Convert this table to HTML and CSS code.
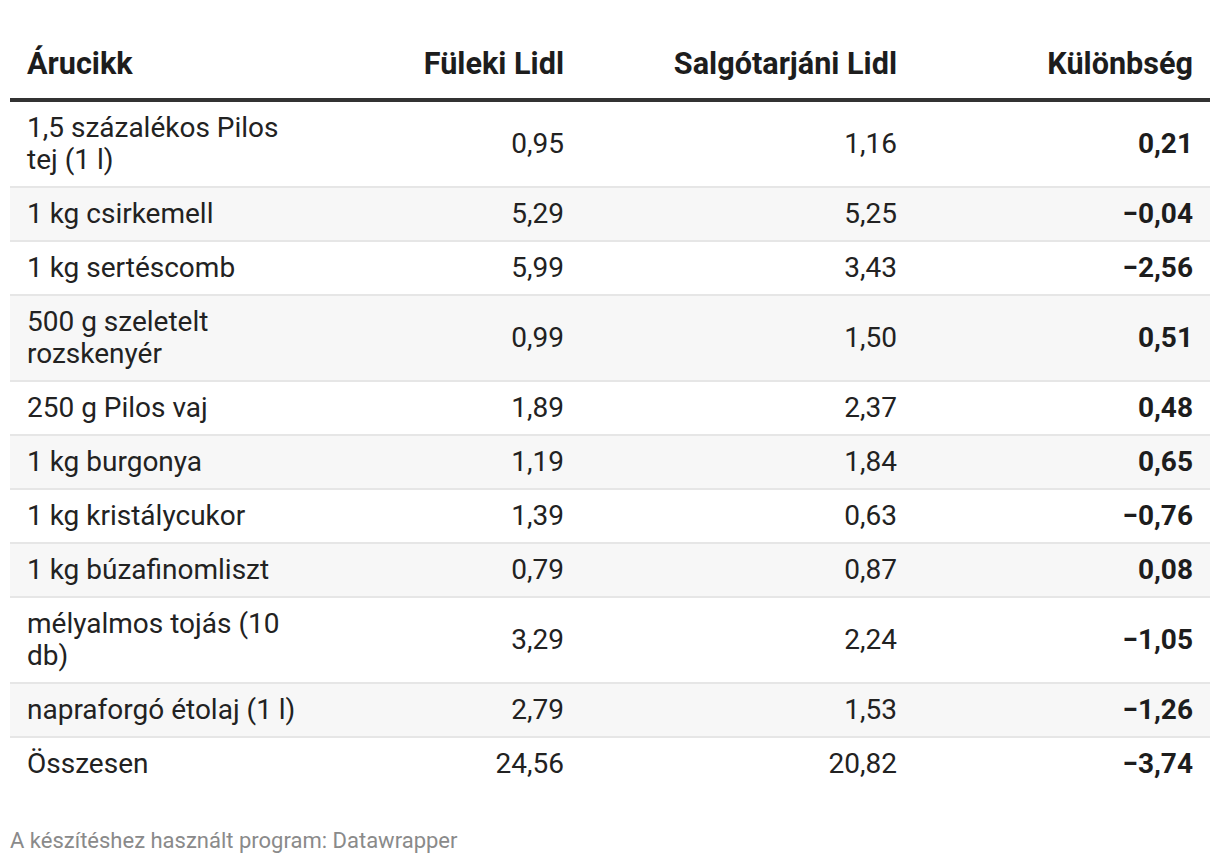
FILE: index.html
```html
<!DOCTYPE html>
<html lang="hu">
<head>
<meta charset="utf-8">
<link rel="stylesheet" href="styles.css">
</head>
<body>
<div class="page">
  <table class="dt">
    <colgroup>
      <col class="c1"><col class="c2"><col class="c3"><col class="c4">
    </colgroup>
    <thead>
      <tr>
        <th class="left">Árucikk</th>
        <th>Füleki Lidl</th>
        <th>Salgótarjáni Lidl</th>
        <th>Különbség</th>
      </tr>
    </thead>
    <tbody>
      <tr><td class="left">1,5 százalékos Pilos tej (1 l)</td><td>0,95</td><td>1,16</td><td class="b">0,21</td></tr>
      <tr><td class="left">1 kg csirkemell</td><td>5,29</td><td>5,25</td><td class="b">−0,04</td></tr>
      <tr><td class="left">1 kg sertéscomb</td><td>5,99</td><td>3,43</td><td class="b">−2,56</td></tr>
      <tr><td class="left">500 g szeletelt rozskenyér</td><td>0,99</td><td>1,50</td><td class="b">0,51</td></tr>
      <tr><td class="left">250 g Pilos vaj</td><td>1,89</td><td>2,37</td><td class="b">0,48</td></tr>
      <tr><td class="left">1 kg burgonya</td><td>1,19</td><td>1,84</td><td class="b">0,65</td></tr>
      <tr><td class="left">1 kg kristálycukor</td><td>1,39</td><td>0,63</td><td class="b">−0,76</td></tr>
      <tr><td class="left">1 kg búzafinomliszt</td><td>0,79</td><td>0,87</td><td class="b">0,08</td></tr>
      <tr><td class="left">mélyalmos tojás (10 db)</td><td>3,29</td><td>2,24</td><td class="b">−1,05</td></tr>
      <tr><td class="left">napraforgó étolaj (1 l)</td><td>2,79</td><td>1,53</td><td class="b">−1,26</td></tr>
      <tr class="last"><td class="left">Összesen</td><td>24,56</td><td>20,82</td><td class="b">−3,74</td></tr>
    </tbody>
  </table>
  <p class="footer">A készítéshez használt program: Datawrapper</p>
</div>
</body>
</html>
```
FILE: styles.css
```css
html, body {
  margin: 0;
  padding: 0;
  background: #ffffff;
}

body {
  font-family: Roboto, "Liberation Sans", sans-serif;
  color: #222222;
}

.page {
  padding: 38px 10px 0 10px;
}

.dt {
  width: 1200px;
  border-collapse: collapse;
  table-layout: fixed;
  font-size: 28px;
  line-height: 32px;
}

.c1 { width: 310px; }
.c2 { width: 261px; }
.c3 { width: 333px; }
.c4 { width: 296px; }

.dt th {
  font-weight: 700;
  font-size: 30.6px;
  text-align: right;
  padding: 10px 17px 18px 17px;
  border-bottom: 4px solid #333333;
  color: #1d1d1d;
  vertical-align: bottom;
}

.dt td {
  text-align: right;
  padding: 10px 17px;
  border-bottom: 2px solid #e6e6e6;
  vertical-align: middle;
}

.dt .left {
  text-align: left;
}

.dt td.b {
  font-weight: 700;
  color: #1d1d1d;
}

.dt tbody tr:nth-child(even) td {
  background: #f7f7f7;
}

.dt tbody tr.last td {
  border-bottom: none;
}

.footer {
  margin: 39px 0 0 0;
  font-size: 22px;
  line-height: 24px;
  color: #8a8a8a;
}
```
